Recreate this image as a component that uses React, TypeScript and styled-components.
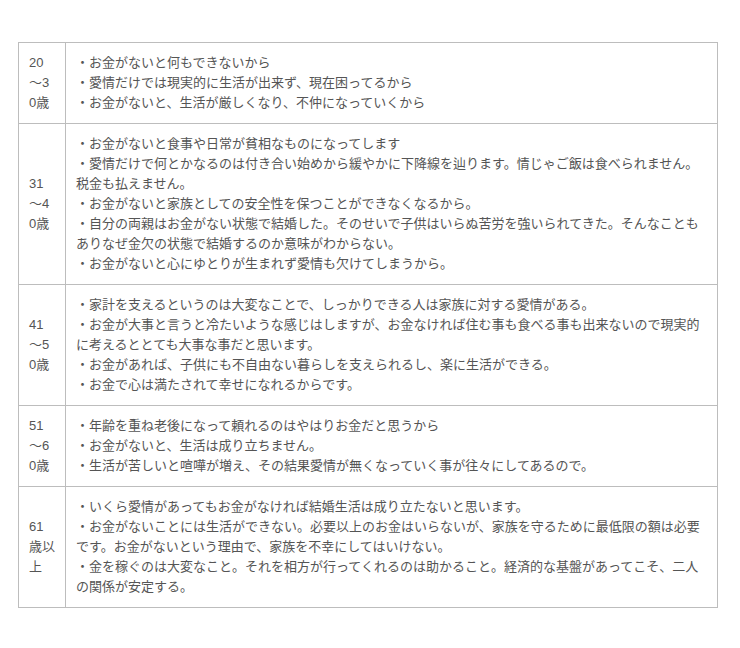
import React from "react";
import styled, { createGlobalStyle } from "styled-components";

const GlobalStyle = createGlobalStyle`
  html, body {
    margin: 0;
    padding: 0;
    background: #fff;
  }
`;

const Page = styled.div`
  padding: 42px 22px 40px 18px;
  font-family: "Liberation Sans", "Noto Sans CJK JP", sans-serif;
  font-size: 13px;
  line-height: 20px;
  color: #555;
`;

const Table = styled.table`
  width: 700px;
  border-collapse: collapse;
  table-layout: fixed;
`;

const Cell = styled.td`
  border: 1px solid #bdbdbd;
  padding: 10px;
  vertical-align: middle;
`;

const AgeCell = styled(Cell)`
  width: 26px;
  line-break: anywhere;
  word-break: break-all;
`;

const Line = styled.div`
  white-space: normal;
`;

interface Row {
  age: string;
  lines: string[];
}

const rows: Row[] = [
  {
    age: "20～30歳",
    lines: [
      "・お金がないと何もできないから",
      "・愛情だけでは現実的に生活が出来ず、現在困ってるから",
      "・お金がないと、生活が厳しくなり、不仲になっていくから",
    ],
  },
  {
    age: "31～40歳",
    lines: [
      "・お金がないと食事や日常が貧相なものになってします",
      "・愛情だけで何とかなるのは付き合い始めから緩やかに下降線を辿ります。情じゃご飯は食べられません。税金も払えません。",
      "・お金がないと家族としての安全性を保つことができなくなるから。",
      "・自分の両親はお金がない状態で結婚した。そのせいで子供はいらぬ苦労を強いられてきた。そんなこともありなぜ金欠の状態で結婚するのか意味がわからない。",
      "・お金がないと心にゆとりが生まれず愛情も欠けてしまうから。",
    ],
  },
  {
    age: "41～50歳",
    lines: [
      "・家計を支えるというのは大変なことで、しっかりできる人は家族に対する愛情がある。",
      "・お金が大事と言うと冷たいような感じはしますが、お金なければ住む事も食べる事も出来ないので現実的に考えるととても大事な事だと思います。",
      "・お金があれば、子供にも不自由ない暮らしを支えられるし、楽に生活ができる。",
      "・お金で心は満たされて幸せになれるからです。",
    ],
  },
  {
    age: "51～60歳",
    lines: [
      "・年齢を重ね老後になって頼れるのはやはりお金だと思うから",
      "・お金がないと、生活は成り立ちません。",
      "・生活が苦しいと喧嘩が増え、その結果愛情が無くなっていく事が往々にしてあるので。",
    ],
  },
  {
    age: "61歳以上",
    lines: [
      "・いくら愛情があってもお金がなければ結婚生活は成り立たないと思います。",
      "・お金がないことには生活ができない。必要以上のお金はいらないが、家族を守るために最低限の額は必要です。お金がないという理由で、家族を不幸にしてはいけない。",
      "・金を稼ぐのは大変なこと。それを相方が行ってくれるのは助かること。経済的な基盤があってこそ、二人の関係が安定する。",
    ],
  },
];

const App: React.FC = () => {
  return (
    <Page>
      <GlobalStyle />
      <Table>
        <tbody>
          {rows.map((row) => (
            <tr key={row.age}>
              <AgeCell>{row.age}</AgeCell>
              <Cell>
                {row.lines.map((line, i) => (
                  <Line key={i}>{line}</Line>
                ))}
              </Cell>
            </tr>
          ))}
        </tbody>
      </Table>
    </Page>
  );
};

export default App;
